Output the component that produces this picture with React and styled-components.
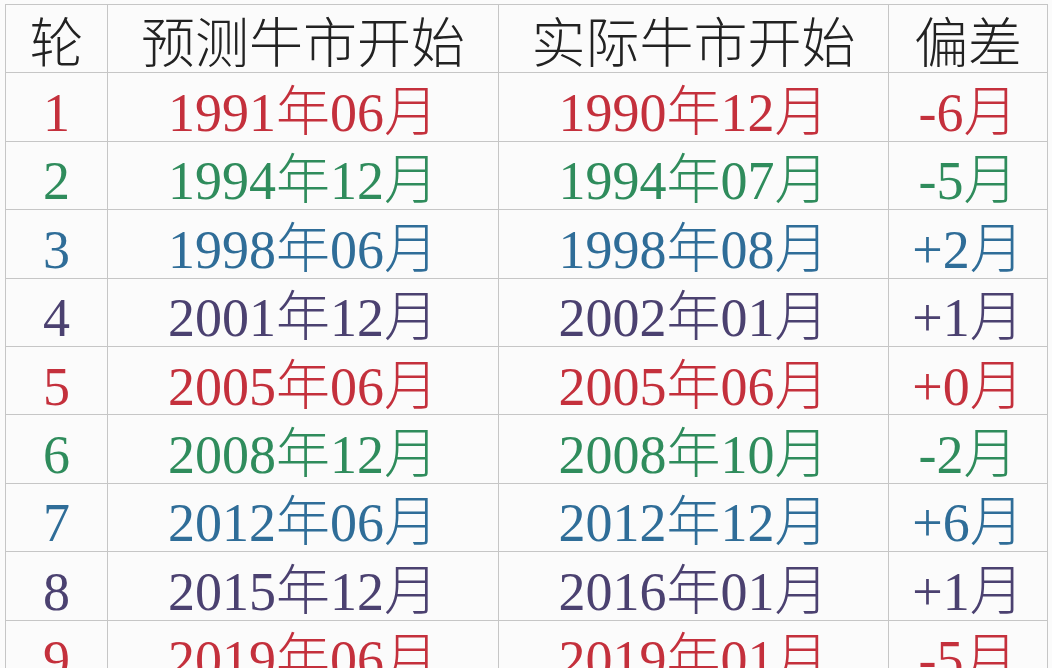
import React from "react";
import styled, { createGlobalStyle } from "styled-components";

const GlobalStyle = createGlobalStyle`
  html, body {
    margin: 0;
    padding: 0;
    background: #fbfbfb;
    overflow: hidden;
  }
  body {
    font-family: "Liberation Serif", "Noto Sans CJK SC", serif;
  }
`;

const Page = styled.div`
  width: 1052px;
  height: 668px;
  overflow: hidden;
  padding: 4px 0 0 5px;
  box-sizing: border-box;
`;

const Sheet = styled.div`
  display: grid;
  grid-template-columns: 102px 391px 390px 159px;
  grid-auto-rows: 68.4px;
  border-top: 1px solid #c6c6c6;
  border-left: 1px solid #c6c6c6;
  width: max-content;
`;

const colors = {
  red: "#c4303c",
  green: "#2f8c5c",
  blue: "#2f6d98",
  purple: "#4b4170",
  black: "#222222",
};

const Cell = styled.div`
  box-sizing: border-box;
  border-right: 1px solid #c6c6c6;
  border-bottom: 1px solid #c6c6c6;
  display: flex;
  align-items: center;
  justify-content: center;
  padding-top: 12px;
  font-family: "Liberation Serif", "Noto Sans CJK SC", serif;
  font-size: 54px;
  font-weight: 300;
  line-height: 1;
  white-space: nowrap;
  color: ${(p) => colors[p.$tone] || colors.black};
`;

const HeaderCell = styled(Cell)`
  padding-top: 12px;
  color: #222222;
`;

const headers = ["轮", "预测牛市开始", "实际牛市开始", "偏差"];

const rows = [
  ["1", "1991年06月", "1990年12月", "-6月", "red"],
  ["2", "1994年12月", "1994年07月", "-5月", "green"],
  ["3", "1998年06月", "1998年08月", "+2月", "blue"],
  ["4", "2001年12月", "2002年01月", "+1月", "purple"],
  ["5", "2005年06月", "2005年06月", "+0月", "red"],
  ["6", "2008年12月", "2008年10月", "-2月", "green"],
  ["7", "2012年06月", "2012年12月", "+6月", "blue"],
  ["8", "2015年12月", "2016年01月", "+1月", "purple"],
  ["9", "2019年06月", "2019年01月", "-5月", "red"],
];

export default function App() {
  return (
    <Page>
      <GlobalStyle />
      <Sheet>
        {headers.map((h) => (
          <HeaderCell key={h}>{h}</HeaderCell>
        ))}
        {rows.map((r) =>
          r.slice(0, 4).map((v, i) => (
            <Cell key={r[0] + "-" + i} $tone={r[4]}>
              {v}
            </Cell>
          ))
        )}
      </Sheet>
    </Page>
  );
}
